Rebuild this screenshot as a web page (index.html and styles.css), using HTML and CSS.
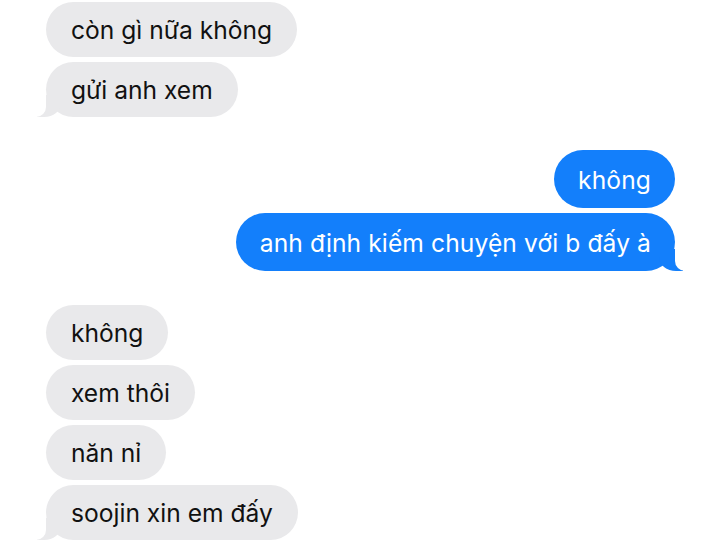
FILE: index.html
```html
<!DOCTYPE html>
<html lang="vi">
  <head>
    <meta charset="UTF-8" />
    <meta name="viewport" content="width=device-width, initial-scale=1.0" />
    <title>Tin nhắn</title>
    <link rel="stylesheet" href="styles.css">
  </head>
  <body>
    <div class="chat">
      <div class="group incoming">
        <div class="bubble">còn gì nữa không</div>
        <div class="bubble">gửi anh xem</div>
      </div>

      <div class="group outgoing">
        <div class="bubble">không</div>
        <div class="bubble">anh định kiếm chuyện với b đấy à</div>
      </div>

      <div class="group incoming">
        <div class="bubble">không</div>
        <div class="bubble">xem thôi</div>
        <div class="bubble">năn nỉ</div>
        <div class="bubble">soojin xin em đấy</div>
      </div>
    </div>
  </body>
</html>
```

FILE: styles.css
```css
:root {
  --grey: #e9e9eb;
  --blue: #137ffb;
  --text: #111111;
  --bg: #ffffff;
}

* {
  margin: 0;
  padding: 0;
  box-sizing: border-box;
}

body {
  font-family: 'Inter', 'Noto Sans', sans-serif;
  background-color: var(--bg);
  color: var(--text);
}

.chat {
  display: flex;
  flex-direction: column;
  gap: 34px;
  padding: 2px 45px 0 46px;
}

.group {
  display: flex;
  flex-direction: column;
  gap: 5px;
}

.incoming {
  align-items: flex-start;
}

.outgoing {
  align-items: flex-end;
  margin-top: -1px;
}

.bubble {
  position: relative;
  font-size: 24.6px;
  line-height: 31px;
  padding: 13px 25px 11px;
  border-radius: 28px;
}

.incoming .bubble {
  background-color: var(--grey);
}

.outgoing .bubble {
  background-color: var(--blue);
  color: #ffffff;
  padding: 14.5px 24px 12.5px;
  border-radius: 29px;
  letter-spacing: 0.1px;
}

/* tails on the last bubble of each group */
.group .bubble:last-child::before,
.group .bubble:last-child::after {
  content: "";
  position: absolute;
  bottom: 0;
  height: 22px;
}

.incoming .bubble:last-child::before {
  left: -9px;
  width: 24px;
  background-color: var(--grey);
  border-bottom-right-radius: 17px 14px;
}

.incoming .bubble:last-child::after {
  left: -14px;
  width: 14px;
  background-color: var(--bg);
  border-bottom-right-radius: 10px;
}

.outgoing .bubble:last-child::before {
  right: -8px;
  width: 24px;
  background-color: var(--blue);
  border-bottom-left-radius: 17px 14px;
}

.outgoing .bubble:last-child::after {
  right: -14px;
  width: 14px;
  background-color: var(--bg);
  border-bottom-left-radius: 10px;
}
```
